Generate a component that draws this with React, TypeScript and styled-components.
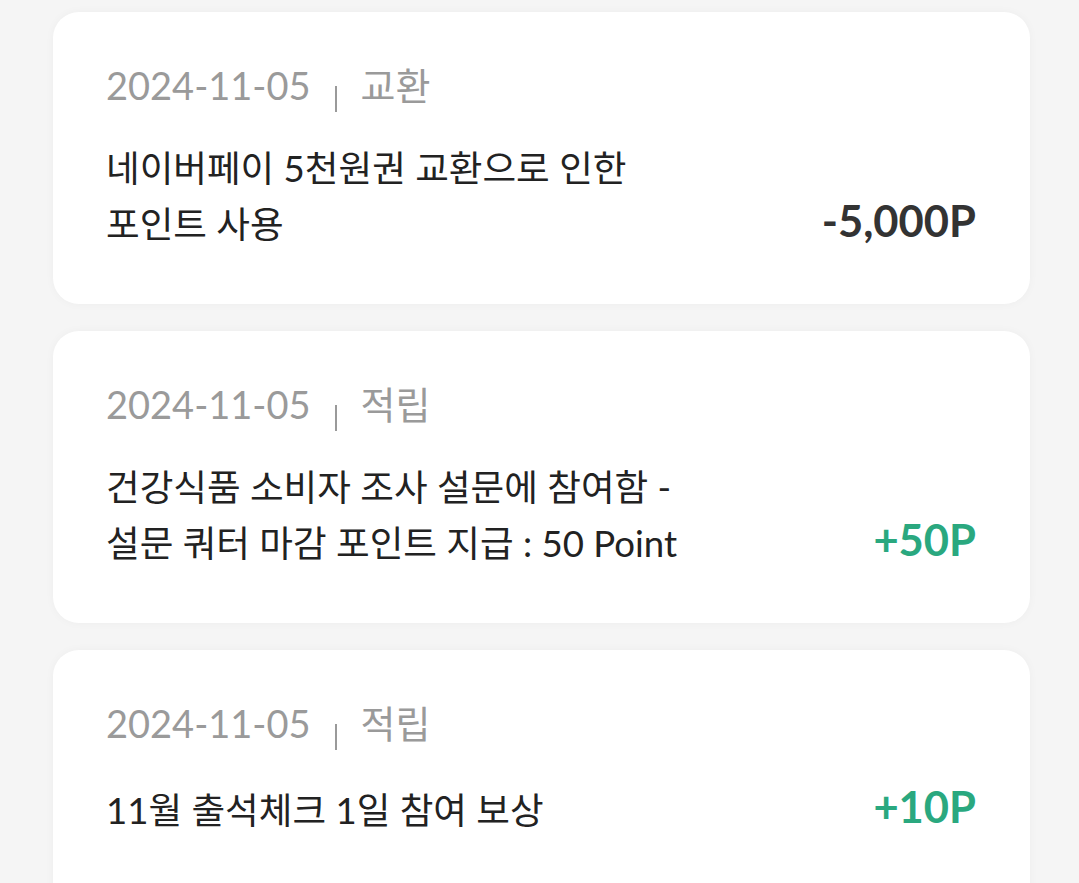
import * as React from 'react';
import styled, { createGlobalStyle } from 'styled-components';

const GlobalStyle = createGlobalStyle`
    html, body {
        margin: 0;
        padding: 0;
        background: #f5f5f5;
    }

    body {
        font-family: Lato, "Noto Sans CJK KR", sans-serif;
        -webkit-font-smoothing: antialiased;
    }
`;

const List = styled.div`
    display: flex;
    flex-direction: column;
    gap: 27px;
    padding: 12px 49px 40px 53px;
    height: 883px;
    box-sizing: border-box;
    overflow: hidden;
`;

const Card = styled.div`
    flex-shrink: 0;
    background: #ffffff;
    border-radius: 26px;
    box-shadow: 0 0 10px rgba(0, 0, 0, 0.035);
    padding: 44px 54px 0 53px;
    height: 292px;
    box-sizing: border-box;
`;

const Meta = styled.div`
    display: flex;
    align-items: center;
    gap: 24px;
    color: #9a9a9a;
    font-size: 38px;
    line-height: 58px;
`;

const Divider = styled.span`
    display: inline-block;
    width: 2px;
    height: 26px;
    background: #9a9a9a;
    margin-top: 28px;
`;

const Row = styled.div`
    display: flex;
    align-items: flex-end;
    justify-content: space-between;
    margin-top: 26px;
`;

const Title = styled.div`
    color: #222222;
    font-size: 36.6px;
    line-height: 56px;
    max-width: 620px;
`;

const Amount = styled.div<{ $plus?: boolean }>`
    color: ${p => (p.$plus ? '#2aa87f' : '#333333')};
    font-size: 43.5px;
    font-weight: 700;
    line-height: 56px;
    white-space: nowrap;
    margin-bottom: 4px;
`;

const items = [
    { date: '2024-11-05', type: '교환', lines: ['네이버페이 5천원권 교환으로 인한', '포인트 사용'], amount: '-5,000P', plus: false },
    { date: '2024-11-05', type: '적립', lines: ['건강식품 소비자 조사 설문에 참여함 -', '설문 쿼터 마감 포인트 지급 : 50 Point'], amount: '+50P', plus: true },
    { date: '2024-11-05', type: '적립', lines: ['11월 출석체크 1일 참여 보상'], amount: '+10P', plus: true },
];

const App = () => {
    return (
        <>
            <GlobalStyle />
            <List>
                {items.map((item, i) => (
                    <Card key={i}>
                        <Meta>
                            <span>{item.date}</span>
                            <Divider />
                            <span>{item.type}</span>
                        </Meta>
                        <Row>
                            <Title>
                                {item.lines.map((l, j) => (
                                    <div key={j}>{l}</div>
                                ))}
                            </Title>
                            <Amount $plus={item.plus}>{item.amount}</Amount>
                        </Row>
                    </Card>
                ))}
            </List>
        </>
    );
};

export default App;
